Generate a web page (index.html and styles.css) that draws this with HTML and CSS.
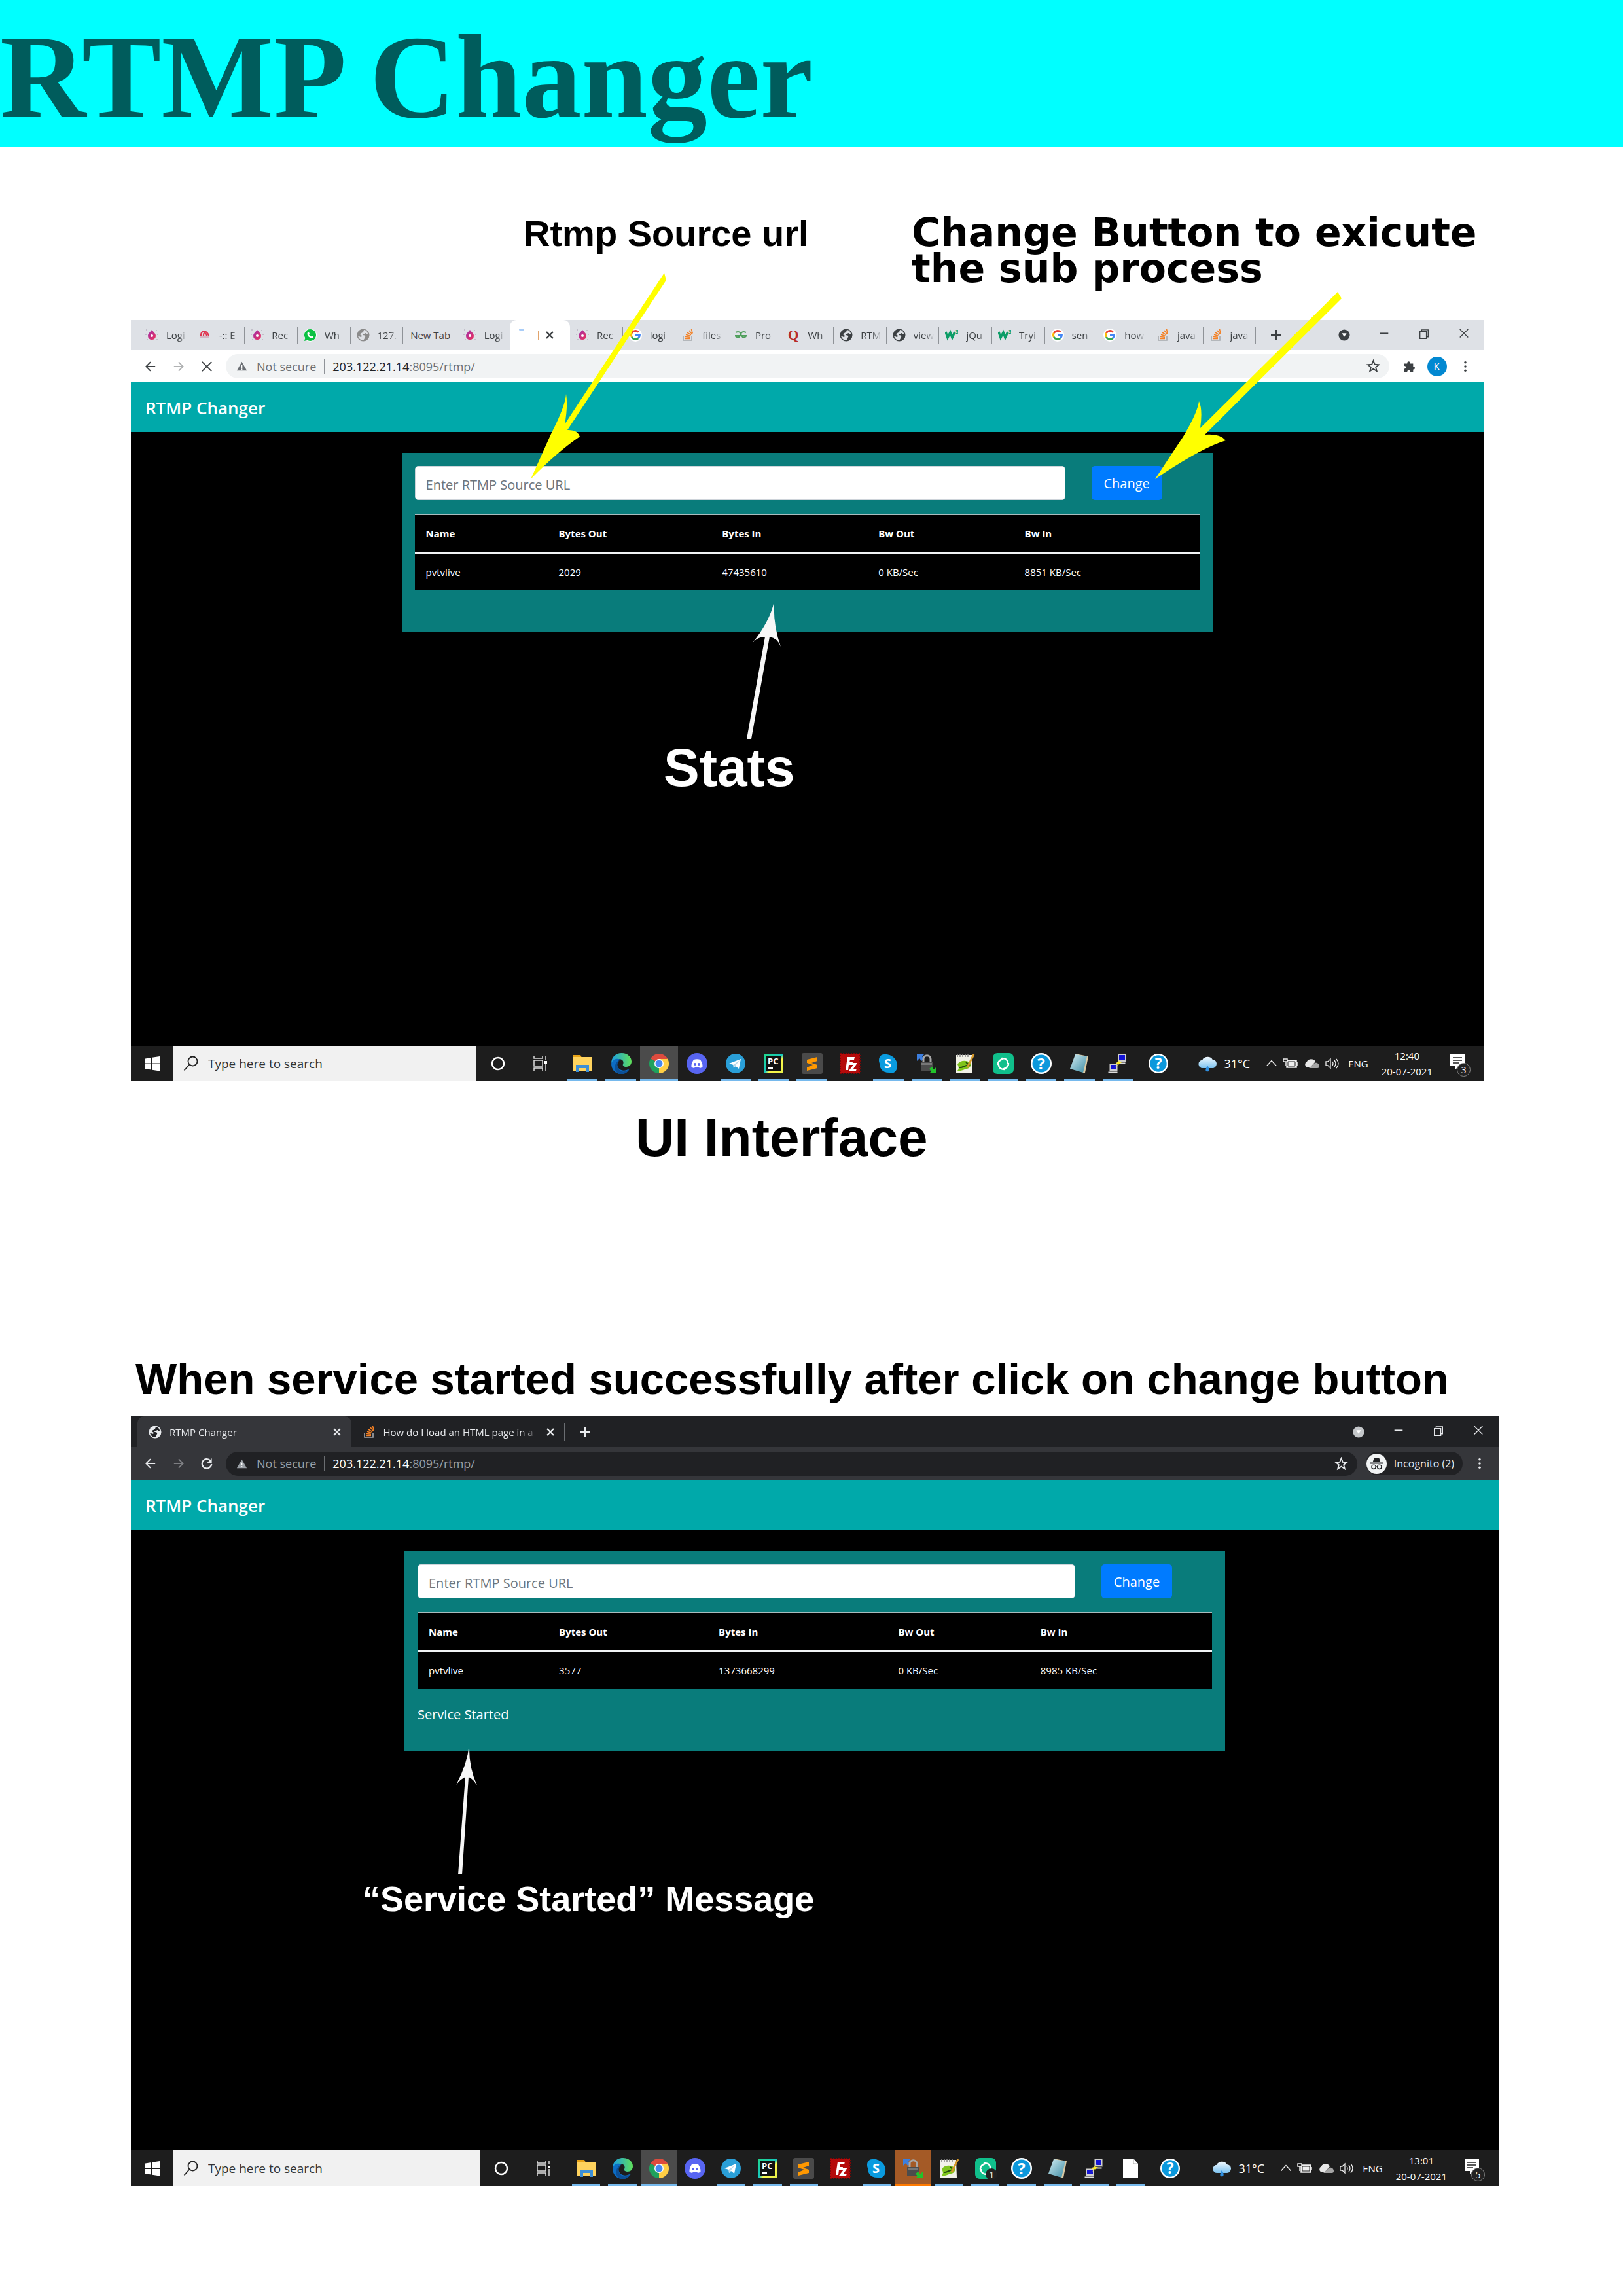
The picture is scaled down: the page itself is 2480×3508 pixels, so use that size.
FILE: index.html
```html
<!DOCTYPE html>
<html lang="en">
<head>
<meta charset="utf-8">
<title>RTMP Changer</title>
<link rel="stylesheet" href="styles.css">
</head>
<body>
<svg class="sprite" aria-hidden="true">
  <defs>
    <linearGradient id="g-drop" x1="0" y1="0" x2="1" y2="1"><stop offset="0" stop-color="#9b2fae"/><stop offset="1" stop-color="#f0305a"/></linearGradient>
    <linearGradient id="g-edge" x1="0" y1="0" x2="1" y2="0"><stop offset="0" stop-color="#1b9de2"/><stop offset="1" stop-color="#5fe05a"/></linearGradient>
    <linearGradient id="g-pc" x1="0" y1="0" x2="1" y2="1"><stop offset="0" stop-color="#21d789"/><stop offset=".5" stop-color="#16c8c0"/><stop offset=".6" stop-color="#fcf84a"/><stop offset="1" stop-color="#e6f04a"/></linearGradient>
    <linearGradient id="g-note" x1="0" y1="0" x2="1" y2="1"><stop offset="0" stop-color="#d4eef4"/><stop offset="1" stop-color="#3b8ba3"/></linearGradient>
    <linearGradient id="g-rain" x1="0" y1="0" x2="0" y2="1"><stop offset="0" stop-color="#f2faff"/><stop offset="1" stop-color="#7cc2f0"/></linearGradient>
  </defs>
  <symbol id="drop" viewBox="0 0 20 20"><path d="M10 2c2 3 6 5 6 9.500a6 5.500 0 0 1-12 0C4 7 8 5 10 2z" fill="url(#g-drop)"/><circle cx="10" cy="11" r="2" fill="#fff"/><g fill="#b9b3c0"><circle cx="2" cy="2" r="1"/><circle cx="17" cy="3" r="1"/><circle cx="1" cy="9" r="1"/><circle cx="19" cy="9" r="1"/><circle cx="3" cy="17" r="1"/><circle cx="18" cy="17" r="1"/></g></symbol>
  <symbol id="arch" viewBox="0 0 20 20"><path d="M4 11c0-9 9-9 12 0M8 11c0-6 3-6 5 0" fill="none" stroke="#e0344f" stroke-width="2.200"/><path d="M3 13h14" stroke="#c98ba0" stroke-width="1"/></symbol>
  <symbol id="whatsapp" viewBox="0 0 20 20"><circle cx="10" cy="10" r="10" fill="#fff"/><path d="M10 1a9 9 0 1 1-4.500 16.800L1 19l1.300-4.300A9 9 0 0 1 10 1z" fill="#0cc143"/><path d="M6 6c1-1 2-1 2.500.500l.500 1.500-1 1c1 2 2 2.500 3.500 3.200l1-1.200 2.500 1.200c0 2-2 2.800-4 2.200-4-1.200-6.500-5-5-8.400z" fill="#fff"/></symbol>
  <symbol id="globe" viewBox="0 0 20 20"><circle cx="10" cy="10" r="9.500" fill="currentColor"/><path d="M11 2c3 0 6 3 6 6-2 1-2-1-4-1-1 2-4 1-4 3 3 0 5 1 4 3-1 1-1 3-3 5-4 0-7-3-8-7l4 2 2-1c0-2-2-2-3-3 1-3 5-1 6-7z" class="globe-land"/></symbol>
  <symbol id="google" viewBox="0 0 20 20"><circle cx="10" cy="10" r="10" fill="#fff"/><g fill="none" stroke-width="3"><path d="M4.300 7A6.400 6.400 0 0 1 14.500 5.500" stroke="#ea4335"/><path d="M4.300 13a6.400 6.400 0 0 1 0-6" stroke="#fbbc05"/><path d="M14.200 14.800A6.400 6.400 0 0 1 4.300 13" stroke="#34a853"/><path d="M10 10h6.400a6.400 6.400 0 0 1-2.200 4.800" stroke="#4285f4"/></g></symbol>
  <symbol id="stack" viewBox="0 0 20 20"><path d="M3 12v6h13v-6" fill="none" stroke="#a5a9ad" stroke-width="1.600"/><path d="M6 15.500h7M6 12.500l7 .8M7 9.300l6.600 2M9 6l6 3.800M12 3l4.500 5.500M15.500 1l1.700 6.500" stroke="#f48024" stroke-width="1.600"/></symbol>
  <symbol id="gfg" viewBox="0 0 20 20"><path d="M2 6c7-3 9 2 7 5-2 4-7 2-7 0h16c0 2-5 4-7 0-2-3 0-8 7-5" fill="none" stroke="#4f9f5c" stroke-width="2"/></symbol>
  <symbol id="quora" viewBox="0 0 20 20"><text x="1" y="17" font-size="21" font-weight="bold" fill="#b92b27" font-family="Liberation Serif">Q</text></symbol>
  <symbol id="w3" viewBox="0 0 20 20"><path d="M1 5l3 9 4-8 3 8 4-9" fill="none" stroke="#0c9d67" stroke-width="3.500"/><text x="16" y="8" font-size="9" font-weight="bold" fill="#0c9d67" font-family="Open Sans">3</text></symbol>
  <symbol id="warn" viewBox="0 0 20 20"><path d="M10 2l9 16H1z" fill="currentColor"/><path d="M10 8v5M10 14.500v2" class="warn-mark" stroke-width="2"/></symbol>
  <symbol id="back" viewBox="0 0 20 20"><path d="M18 10H3M10 2.500L2.500 10l7.500 7.500" fill="none" stroke="currentColor" stroke-width="2"/></symbol>
  <symbol id="forward" viewBox="0 0 20 20"><path d="M2 10h15M10 2.500l7.500 7.500-7.500 7.500" fill="none" stroke="currentColor" stroke-width="2"/></symbol>
  <symbol id="reload" viewBox="0 0 20 20"><path d="M16 5a8 8 0 1 0 2 6" fill="none" stroke="currentColor" stroke-width="2.500"/><path d="M18.500 1v8h-8z" fill="currentColor"/></symbol>
  <symbol id="close" viewBox="0 0 20 20"><path d="M2 2l16 16M18 2L2 18" stroke="currentColor" stroke-width="2"/></symbol>
  <symbol id="tabx" viewBox="0 0 20 20"><path d="M5 5l10 10M15 5L5 15" stroke="currentColor" stroke-width="2.400"/></symbol>
  <symbol id="plus" viewBox="0 0 20 20"><path d="M10 2v16M2 10h16" stroke="currentColor" stroke-width="2.500"/></symbol>
  <symbol id="down" viewBox="0 0 20 20"><circle cx="10" cy="10" r="9.500" fill="currentColor"/><path d="M6 7h8l-4 6z" class="down-mark"/></symbol>
  <symbol id="min" viewBox="0 0 20 20"><path d="M3 7h14" stroke="currentColor" stroke-width="2"/></symbol>
  <symbol id="restore" viewBox="0 0 20 20"><path d="M3 4h11v12H3zM6 4V1h11v12h-3" fill="none" stroke="currentColor" stroke-width="1.500"/></symbol>
  <symbol id="winx" viewBox="0 0 20 20"><path d="M3 0l14 14M17 0L3 14" stroke="currentColor" stroke-width="1.500"/></symbol>
  <symbol id="star" viewBox="0 0 20 20"><path d="M10 2l2.200 5.400 5.800.400-4.500 3.700 1.500 5.700-5-3.200-5 3.200 1.500-5.700L2 7.800l5.800-.400z" fill="none" stroke="currentColor" stroke-width="1.800"/></symbol>
  <symbol id="puzzle" viewBox="0 0 20 20"><path d="M2 5h5c-1-5 6-5 5 0h5v5c4-1 4 6 0 5v4h-5c0-4-5-4-5 0H2v-5c4 0 4-5 0-5z" fill="currentColor"/></symbol>
  <symbol id="menu" viewBox="0 0 20 20"><g fill="currentColor"><circle cx="10" cy="3" r="2"/><circle cx="10" cy="10" r="2"/><circle cx="10" cy="17" r="2"/></g></symbol>
  <symbol id="incognito" viewBox="0 0 32 32"><circle cx="16" cy="16" r="16" fill="#f1f3f4"/><path d="M10 13l2-6h8l2 6zM6 14h20v2H6z" fill="#202124"/><g fill="none" stroke="#202124" stroke-width="1.500"><circle cx="11.500" cy="21" r="3.300"/><circle cx="20.500" cy="21" r="3.300"/><path d="M15 21q1-1 2 0"/></g></symbol>

  <symbol id="windows" viewBox="0 0 24 24"><path d="M1 4.500L10 3v8.500H1zM11.500 2.800L23 1v10.500H11.500zM1 13h9v8.500L1 20zM11.500 13H23v10.500l-11.500-1.800z" fill="#fff"/></symbol>
  <symbol id="search" viewBox="0 0 24 24"><circle cx="14.500" cy="8.500" r="7" fill="none" stroke="#222" stroke-width="1.800"/><path d="M9.500 13.500L1.500 22.500" stroke="#222" stroke-width="1.800"/></symbol>
  <symbol id="cortana" viewBox="0 0 24 24"><circle cx="12" cy="12" r="9" fill="none" stroke="#fff" stroke-width="2.500"/></symbol>
  <symbol id="taskview" viewBox="0 0 24 24"><path d="M2 1v3h13V1M2 23v-4h13v4M2 7h13v9H2zM20 1v5M20 13v10" fill="none" stroke="#ddd" stroke-width="1.500"/><path d="M18 8h4v4h-4z" fill="#fff"/></symbol>
  <symbol id="folder" viewBox="0 0 32 32"><path d="M1 3h12l2 4H1z" fill="#e8a317"/><path d="M1 6h30v21H1z" fill="#ffd35e"/><path d="M6 29V18h20v11h-5v-6H11v6z" fill="#3d8fd6"/></symbol>
  <symbol id="edge" viewBox="0 0 32 32"><path d="M1 16C1 6 8 0 17 0c9 0 15 6 15 13 0 5-4 8-8 8-4 0-6-2-5-4 2-4-1-8-6-8C6 9 2 13 1 16z" fill="url(#g-edge)"/><path d="M1 16C3 9 10 7 15 10c-5 1-7 9-2 14 5 4 10 3 16 0-3 5-7 8-13 8C7 32 1 25 1 16z" fill="#0c6cc4"/><path d="M14 11c-5 4-5 12 1 16 4 3 9 1 14-3-5 10-16 11-21 4C4 20 9 12 14 11z" fill="#0b4f97"/></symbol>
  <symbol id="chrome" viewBox="0 0 32 32"><path d="M16 16L3 8.500A15 15 0 0 1 29 8.500z" fill="#dd4b3e"/><path d="M16 16l13-7.500A15 15 0 0 1 16 31z" fill="#ffce44"/><path d="M16 16v0l0 15A15 15 0 0 1 3 8.500z" fill="#1fa15d"/><path d="M16 9h13.200l-6.500 11L16 31l6-12z" fill="#ffce44"/><circle cx="16" cy="16" r="7" fill="#fff"/><circle cx="16" cy="16" r="5.500" fill="#4688f1"/></symbol>
  <symbol id="discord" viewBox="0 0 32 32"><circle cx="16" cy="16" r="16" fill="#5865f2"/><path d="M11 10c3-1 7-1 10 0 2 3 4 7 3.500 11-1.500 1-3 2-4.500 2l-1-2h-6l-1 2c-1.500 0-3-1-4.500-2C7 17 9 13 11 10z" fill="#fff"/><circle cx="13" cy="17" r="2" fill="#5865f2"/><circle cx="19" cy="17" r="2" fill="#5865f2"/></symbol>
  <symbol id="telegram" viewBox="0 0 32 32"><circle cx="16" cy="16" r="15" fill="#2a9fd8"/><path d="M6 16l18-7-3 15-5-4-3 3-.500-5z" fill="#fff"/><path d="M12.500 18L22 11l-7 9-2 3z" fill="#b9d9ea"/></symbol>
  <symbol id="pycharm" viewBox="0 0 32 32"><path d="M1 1h30v30H1z" fill="url(#g-pc)"/><path d="M5 5h22v22H5z" fill="#111"/><text x="7" y="17" font-size="13" font-weight="bold" fill="#fff" font-family="Open Sans">PC</text><path d="M8 23h7" stroke="#fff" stroke-width="2"/></symbol>
  <symbol id="sublime" viewBox="0 0 32 32"><rect width="32" height="32" rx="3" fill="#4a4a4a"/><path d="M24 6v6l-9 3 9 3v5L8 27v-5l9-4-9-3v-5z" fill="#ff9800"/></symbol>
  <symbol id="filezilla" viewBox="0 0 32 32"><path d="M1 1h30v30H1z" fill="#b50a0a" stroke="#7d0606" stroke-width="2" stroke-dasharray="2 2"/><path d="M9 26l3-20h11l-1 4h-6l-1 4h5l-1 4h-5l-1 8z" fill="#fff"/><path d="M17 15h10l-6 9h5l-1 3H14l7-9h-4z" fill="#fff"/></symbol>
  <symbol id="skype" viewBox="0 0 32 32"><path d="M10 2c3-1 17 1 20 14 1 12-5 16-12 14C6 30 3 22 3 16 0 8 4 2 10 2z" fill="#0a9bdf"/><text x="10" y="23" font-size="20" font-weight="bold" fill="#fff" font-family="Open Sans">S</text></symbol>
  <symbol id="lock" viewBox="0 0 32 32"><path d="M1 2h11l-3 3 3 4-4 3-3-4-4 4z" fill="#3c7fe0"/><path d="M11 15V9c0-7 11-7 11 0v6" fill="none" stroke="#a8a8a8" stroke-width="3"/><path d="M7 14h18v13H7z" fill="#4c4c4c"/><path d="M8 15h16v3H8z" fill="#777"/><path d="M31 31H20l3-3-3-4 4-3 3 4 4-4z" fill="#22c32b"/></symbol>
  <symbol id="npp" viewBox="0 0 32 32"><path d="M3 3h24l1 27H3z" fill="#f2f2e8"/><path d="M5 2v4M9 2v4M13 2v4M17 2v4M21 2v4" stroke="#888" stroke-width="1.500"/><path d="M5 17c4-6 14-7 19-2 4 3-1 10-6 9-4 2-9 4-13 3 3-3 2-6 0-10z" fill="#7fc41c"/><path d="M8 22c5 1 8-4 16-4M18 14l6 5" stroke="#234a10" stroke-width="2" fill="none"/><path d="M30 2L20 22" stroke="#d79a2b" stroke-width="3"/></symbol>
  <symbol id="sync" viewBox="0 0 32 32"><rect width="32" height="32" rx="7" fill="#10bf8b"/><path d="M14 8c7 0 9 4 9 7M24 16c0 5-4 7-7 8M18 25c-7 0-9-4-9-7M8 17c0-5 4-7 7-8" fill="none" stroke="#fff" stroke-width="2.500" stroke-linecap="round"/></symbol>
  <symbol id="help" viewBox="0 0 32 32"><circle cx="16" cy="16" r="16" fill="#fff"/><circle cx="16" cy="16" r="13.500" fill="#0b98dc"/><text x="16" y="25" text-anchor="middle" font-size="24" font-weight="bold" fill="#fff" font-family="Open Sans">?</text></symbol>
  <symbol id="notepad" viewBox="0 0 32 32"><path d="M10 1l20 4-5 25-3 1z" fill="#d9c9a4"/><path d="M10 2l18 3-6 25L2 24z" fill="url(#g-note)"/></symbol>
  <symbol id="putty" viewBox="0 0 32 32"><g stroke="#222" stroke-width="1"><path d="M16 1h13v13H16z" fill="#cfcfcf"/><path d="M13 14h15v3H13z" fill="#ddd"/><path d="M3 16h13v12H3z" fill="#cfcfcf"/><path d="M1 28h15v3H1z" fill="#ddd"/></g><path d="M18 3h9v8h-9zM5 18h9v7H5z" fill="#1414d6"/><path d="M20 10l-8 7 5 0-7 6 12-9h-5z" fill="#ffec1f"/></symbol>
  <symbol id="file" viewBox="0 0 32 32"><path d="M5 1h16l7 8v22H5z" fill="#fff"/><path d="M21 1v8h7" fill="none" stroke="#aaa" stroke-width="1"/></symbol>
  <symbol id="rain" viewBox="0 0 32 32"><path d="M8 24a7 7 0 0 1-1-14 10 9 0 0 1 18-1 7.500 7.500 0 0 1-1 15z" fill="url(#g-rain)"/><path d="M16 19c3 5 3 6 3 8a3 3 0 0 1-6 0c0-2 1-4 3-8z" fill="#2f8fe0"/></symbol>
  <symbol id="caret" viewBox="0 0 20 20"><path d="M2 14l8-9 8 9" fill="none" stroke="#eee" stroke-width="1.600"/></symbol>
  <symbol id="battery" viewBox="0 0 24 24"><path d="M6 7h15v11H6zM22 10v5" fill="#eee" stroke="#eee" stroke-width="1.500"/><path d="M8 9h11v7H8z" fill="#eee" stroke="#222" stroke-width="1"/><path d="M1 5h6v4H1zM4 9v7" stroke="#eee" stroke-width="1.500" fill="#222"/></symbol>
  <symbol id="cloud" viewBox="0 0 24 24"><path d="M5 18a5 5 0 0 1 0-9 7 6 0 0 1 13 0l-8 9z" fill="#e8e8e8"/><path d="M8 19l9-8c4-1 7 2 7 5 0 2-1 3-3 3z" fill="#a5a5a5"/></symbol>
  <symbol id="volume" viewBox="0 0 24 24"><path d="M2 9h3l4-4v14l-4-4H2z" fill="none" stroke="#eee" stroke-width="1.300"/><path d="M12 9q2 3 0 6M15 7q4 5 0 10M18 5q6 7 0 14" fill="none" stroke="#eee" stroke-width="1.300"/></symbol>
  <symbol id="note" viewBox="0 0 32 32"><path d="M1 2h22v18h-9l-5 5v-5H1z" fill="#fff"/><path d="M5 7h14M5 11h14M5 15h9" stroke="#222" stroke-width="1.500"/></symbol>
</svg>

<header class="banner"><h1>RTMP Changer</h1></header>

<main>
  <section class="figure">
    <div class="labels">
      <p class="label-source">Rtmp Source url</p>
      <p class="label-change">Change Button to exicute<br>the sub process</p>
    </div>

    <div class="shot shot-light">
      <div class="tabstrip">
        <div class="tabs">
          <button class="tab"><svg><use href="#drop"/></svg><span>Logi</span></button>
          <button class="tab"><svg><use href="#arch"/></svg><span>-:: E</span></button>
          <button class="tab"><svg><use href="#drop"/></svg><span>Rec</span></button>
          <button class="tab"><svg><use href="#whatsapp"/></svg><span>Wh</span></button>
          <button class="tab"><svg class="faded"><use href="#globe"/></svg><span>127.</span></button>
          <button class="tab tab-plain"><span>New Tab</span></button>
          <button class="tab tab-last"><svg><use href="#drop"/></svg><span>Logi</span></button>
          <button class="tab tab-active"><i class="spinner"></i><i class="sliver"></i><svg><use href="#tabx"/></svg></button>
          <button class="tab"><svg><use href="#drop"/></svg><span>Rec</span></button>
          <button class="tab"><svg><use href="#google"/></svg><span>logi</span></button>
          <button class="tab"><svg><use href="#stack"/></svg><span>files</span></button>
          <button class="tab"><svg><use href="#gfg"/></svg><span>Pro</span></button>
          <button class="tab"><svg><use href="#quora"/></svg><span>Wh</span></button>
          <button class="tab"><svg><use href="#globe"/></svg><span>RTM</span></button>
          <button class="tab"><svg><use href="#globe"/></svg><span>view</span></button>
          <button class="tab"><svg><use href="#w3"/></svg><span>jQu</span></button>
          <button class="tab"><svg><use href="#w3"/></svg><span>Tryi</span></button>
          <button class="tab"><svg><use href="#google"/></svg><span>sen</span></button>
          <button class="tab"><svg><use href="#google"/></svg><span>how</span></button>
          <button class="tab"><svg><use href="#stack"/></svg><span>java</span></button>
          <button class="tab"><svg><use href="#stack"/></svg><span>java</span></button>
        </div>
        <button class="newtab" aria-label="New tab"><svg><use href="#plus"/></svg></button>
        <div class="wincontrols">
          <button aria-label="Tab search"><svg><use href="#down"/></svg></button>
          <button aria-label="Minimise"><svg><use href="#min"/></svg></button>
          <button aria-label="Restore"><svg><use href="#restore"/></svg></button>
          <button aria-label="Close"><svg><use href="#winx"/></svg></button>
        </div>
      </div>
      <div class="toolbar">
        <button class="tool" aria-label="Back"><svg><use href="#back"/></svg></button>
        <button class="tool dim" aria-label="Forward"><svg><use href="#forward"/></svg></button>
        <button class="tool" aria-label="Stop"><svg><use href="#close"/></svg></button>
        <div class="omnibox">
          <svg><use href="#warn"/></svg><span class="secure">Not secure</span>
          <span class="url"><b>203.122.21.14</b>:8095/rtmp/</span>
          <svg class="star"><use href="#star"/></svg>
        </div>
        <button class="tool" aria-label="Extensions"><svg><use href="#puzzle"/></svg></button>
        <button class="tool" aria-label="Profile"><span class="avatar">K</span></button>
        <button class="tool" aria-label="Menu"><svg><use href="#menu"/></svg></button>
      </div>
      <nav class="navbar"><a href="#">RTMP Changer</a></nav>
      <div class="page">
        <div class="panel">
          <form class="source-form">
            <input type="text" placeholder="Enter RTMP Source URL" aria-label="RTMP source URL">
            <button type="button">Change</button>
          </form>
          <table class="stats">
            <colgroup><col class="a1"><col class="a2"><col class="a3"><col class="a4"><col></colgroup>
            <thead><tr><th>Name</th><th>Bytes Out</th><th>Bytes In</th><th>Bw Out</th><th>Bw In</th></tr></thead>
            <tbody><tr><td>pvtvlive</td><td>2029</td><td>47435610</td><td>0 KB/Sec</td><td>8851 KB/Sec</td></tr></tbody>
          </table>
        </div>
      </div>
      <div class="taskbar">
        <button class="start" aria-label="Start"><svg><use href="#windows"/></svg></button>
        <label class="searchbox"><svg><use href="#search"/></svg><input type="text" placeholder="Type here to search" aria-label="Search"></label>
        <button class="sys" aria-label="Cortana"><svg><use href="#cortana"/></svg></button>
        <button class="sys" aria-label="Task view"><svg><use href="#taskview"/></svg></button>
        <div class="apps">
          <button class="app open"><svg><use href="#folder"/></svg></button>
          <button class="app open"><svg><use href="#edge"/></svg></button>
          <button class="app open current"><svg><use href="#chrome"/></svg></button>
          <button class="app"><svg><use href="#discord"/></svg></button>
          <button class="app open"><svg><use href="#telegram"/></svg></button>
          <button class="app open"><svg><use href="#pycharm"/></svg></button>
          <button class="app open"><svg><use href="#sublime"/></svg></button>
          <button class="app"><svg><use href="#filezilla"/></svg></button>
          <button class="app open"><svg><use href="#skype"/></svg></button>
          <button class="app open"><svg><use href="#lock"/></svg></button>
          <button class="app open"><svg><use href="#npp"/></svg></button>
          <button class="app open"><svg><use href="#sync"/></svg></button>
          <button class="app open"><svg><use href="#help"/></svg></button>
          <button class="app open"><svg><use href="#notepad"/></svg></button>
          <button class="app open"><svg><use href="#putty"/></svg></button>
        </div>
        <button class="sys assist" aria-label="Help"><svg><use href="#help"/></svg></button>
        <div class="tray">
          <svg class="weather"><use href="#rain"/></svg><span class="temp">31°C</span>
          <svg class="caret"><use href="#caret"/></svg>
          <svg><use href="#battery"/></svg><svg><use href="#cloud"/></svg><svg><use href="#volume"/></svg>
          <span class="lang">ENG</span>
          <span class="clock">12:40<br>20-07-2021</span>
          <span class="notes"><svg><use href="#note"/></svg><em>3</em></span>
        </div>
      </div>
      <p class="callout callout-stats">Stats</p>
      <svg class="arrow arrow-stats" viewBox="1140 918 56 212"><path d="M1183 919Q1181 955 1193 988Q1188 975 1176 973L1148 1129L1141 1129L1169 973Q1158 973 1150 982Q1176 950 1183 919z" fill="#f7f7f7"/></svg>
    </div>

    <svg class="arrow arrow-source" viewBox="810 416 210 318"><path d="M1015 417L1018 428L867 657Q882 656 886 667Q852 690 811 732L842 663Q864 620 865 602Q868 620 863 648z" fill="#ff0"/></svg>
    <svg class="arrow arrow-change" viewBox="1764 445 288 288"><path d="M2044 446L2050 456L1841 664Q1864 662 1873 673Q1836 684 1765 732L1808 667Q1830 630 1832 613Q1838 625 1834 654z" fill="#ff0"/></svg>
    <h2 class="figcaption">UI Interface</h2>
  </section>

  <section class="figure">
    <h2 class="heading">When service started successfully after click on change button</h2>
    <div class="shot shot-dark">
      <div class="tabstrip">
        <div class="tabs">
          <button class="tab tab-active"><svg><use href="#globe"/></svg><span>RTMP Changer</span><svg><use href="#tabx"/></svg></button>
          <button class="tab"><svg><use href="#stack"/></svg><span>How do I load an HTML page in a</span><svg><use href="#tabx"/></svg></button>
        </div>
        <button class="newtab" aria-label="New tab"><svg><use href="#plus"/></svg></button>
        <div class="wincontrols">
          <button aria-label="Tab search"><svg><use href="#down"/></svg></button>
          <button aria-label="Minimise"><svg><use href="#min"/></svg></button>
          <button aria-label="Restore"><svg><use href="#restore"/></svg></button>
          <button aria-label="Close"><svg><use href="#winx"/></svg></button>
        </div>
      </div>
      <div class="toolbar">
        <button class="tool" aria-label="Back"><svg><use href="#back"/></svg></button>
        <button class="tool dim" aria-label="Forward"><svg><use href="#forward"/></svg></button>
        <button class="tool" aria-label="Reload"><svg><use href="#reload"/></svg></button>
        <div class="omnibox">
          <svg><use href="#warn"/></svg><span class="secure">Not secure</span>
          <span class="url"><b>203.122.21.14</b>:8095/rtmp/</span>
          <svg class="star"><use href="#star"/></svg>
        </div>
        <button class="pill"><svg><use href="#incognito"/></svg>Incognito (2)</button>
        <button class="tool" aria-label="Menu"><svg><use href="#menu"/></svg></button>
      </div>
      <nav class="navbar"><a href="#">RTMP Changer</a></nav>
      <div class="page">
        <div class="panel">
          <form class="source-form">
            <input type="text" placeholder="Enter RTMP Source URL" aria-label="RTMP source URL">
            <button type="button">Change</button>
          </form>
          <table class="stats">
            <colgroup><col class="b1"><col class="b2"><col class="b3"><col class="b4"><col></colgroup>
            <thead><tr><th>Name</th><th>Bytes Out</th><th>Bytes In</th><th>Bw Out</th><th>Bw In</th></tr></thead>
            <tbody><tr><td>pvtvlive</td><td>3577</td><td>1373668299</td><td>0 KB/Sec</td><td>8985 KB/Sec</td></tr></tbody>
          </table>
          <p class="status">Service Started</p>
        </div>
      </div>
      <div class="taskbar">
        <button class="start" aria-label="Start"><svg><use href="#windows"/></svg></button>
        <label class="searchbox"><svg><use href="#search"/></svg><input type="text" placeholder="Type here to search" aria-label="Search"></label>
        <button class="sys" aria-label="Cortana"><svg><use href="#cortana"/></svg></button>
        <button class="sys" aria-label="Task view"><svg><use href="#taskview"/></svg></button>
        <div class="apps">
          <button class="app open"><svg><use href="#folder"/></svg></button>
          <button class="app open"><svg><use href="#edge"/></svg></button>
          <button class="app open current"><svg><use href="#chrome"/></svg></button>
          <button class="app"><svg><use href="#discord"/></svg></button>
          <button class="app open"><svg><use href="#telegram"/></svg></button>
          <button class="app open"><svg><use href="#pycharm"/></svg></button>
          <button class="app open"><svg><use href="#sublime"/></svg></button>
          <button class="app"><svg><use href="#filezilla"/></svg></button>
          <button class="app open"><svg><use href="#skype"/></svg></button>
          <button class="app open alert"><svg><use href="#lock"/></svg></button>
          <button class="app open"><svg><use href="#npp"/></svg></button>
          <button class="app open"><svg><use href="#sync"/></svg><em>1</em></button>
          <button class="app open"><svg><use href="#help"/></svg></button>
          <button class="app open"><svg><use href="#notepad"/></svg></button>
          <button class="app open"><svg><use href="#putty"/></svg></button>
          <button class="app open"><svg><use href="#file"/></svg></button>
        </div>
        <button class="sys assist" aria-label="Help"><svg><use href="#help"/></svg></button>
        <div class="tray">
          <svg class="weather"><use href="#rain"/></svg><span class="temp">31°C</span>
          <svg class="caret"><use href="#caret"/></svg>
          <svg><use href="#battery"/></svg><svg><use href="#cloud"/></svg><svg><use href="#volume"/></svg>
          <span class="lang">ENG</span>
          <span class="clock">13:01<br>20-07-2021</span>
          <span class="notes"><svg><use href="#note"/></svg><em>5</em></span>
        </div>
      </div>
      <p class="callout callout-message">“Service Started” Message</p>
      <svg class="arrow arrow-message" viewBox="696 2665 34 200"><path d="M717 2666Q716 2700 729 2728Q723 2718 716 2715L706 2864L700 2864L711 2715Q704 2718 697 2727Q714 2695 717 2666z" fill="#f7f7f7"/></svg>
    </div>
  </section>
</main>
</body>
</html>
```
FILE: styles.css
```css
* { box-sizing: border-box; }
body { margin: 0; background: #fff; color: #000; font-family: "Open Sans", "Noto Sans", sans-serif; }
h1, h2, p { margin: 0; }
button { border: 0; padding: 0; margin: 0; background: none; color: inherit; font: inherit; }
svg { display: block; flex: none; width: 20px; height: 20px; overflow: visible; }
em { font-style: normal; }
.sprite { position: absolute; width: 0; height: 0; visibility: hidden; }

/* Document headings */
.banner { background: #0ff; padding-top: 10px; }
.banner h1 { font: bold 182px/215px "Liberation Serif", serif; color: #005c5c; white-space: nowrap; }
.figure { position: relative; }
.labels { display: flex; align-items: baseline; min-height: 264px; padding: 92px 0 0 800px; font-weight: bold; white-space: nowrap; }
.label-source { width: 593px; font: bold 56px/80px "Liberation Sans", sans-serif; }
.label-change { font: bold 60px/55px "DejaVu Sans", sans-serif; }
.figcaption { padding: 41px 0 284px 971px; font: bold 82px/90px "Liberation Sans", sans-serif; }
.heading { padding: 0 0 17px 207px; font: bold 67px/80px "Liberation Sans", sans-serif; white-space: nowrap; }

/* Screens */
.shot { position: relative; background: #000; }
.shot-light { margin: 0 212px 0 200px; --chrome: #dee1e6; --bar: #fff; --field: #f1f3f4; --ink: #3c4043; --muted: #6b6f74; --strong: #202124; --line: #8f9398; }
.shot-dark { margin: 0 190px 0 200px; --chrome: #202124; --bar: #35363a; --field: #202124; --ink: #e8eaed; --muted: #9aa0a6; --strong: #fff; --line: #6a6d71; }

.tabstrip { display: flex; align-items: center; height: 46px; background: var(--chrome); color: var(--ink); }
.shot-dark .tabstrip { height: 47px; }
.tabs { display: flex; align-self: stretch; flex: 0 1 1706px; margin-left: 13px; min-width: 0; }
.shot-dark .tabs { flex-basis: 653px; margin-left: 10px; }
.tab { position: relative; display: flex; align-items: center; flex: 1 1 0; gap: 12px; min-width: 0; padding: 0 4px 0 9px; font-size: 15px; line-height: 24px; text-align: left; white-space: nowrap; }
.tab::after { content: ""; position: absolute; right: 0; top: 10px; width: 1px; height: 27px; background: var(--line); }
.tab span { flex: 1; overflow: hidden; -webkit-mask-image: linear-gradient(to right, #000 50%, transparent 90%); mask-image: linear-gradient(to right, #000 50%, transparent 90%); }
.tab-plain span { -webkit-mask-image: none; mask-image: none; }
.tab-plain { padding-left: 11px; }
.tab-last::after, .tab-active::after { display: none; }
.tab-active { background: var(--bar); border-radius: 10px 10px 0 0; }
.faded { color: #8b8b8b; }
.shot-light .tab-active { gap: 7px; padding: 0 10px 0 14px; }
.spinner { width: 8px; height: 3px; margin: -18px 14px 0 0; border-radius: 3px; background: #a9cdf8; }
.sliver { width: 1px; height: 13px; background: #e2a46c; }
.shot-dark .tab { gap: 12px; padding: 0 12px 0 17px; }
.shot-dark .tab span { -webkit-mask-image: linear-gradient(to right, #000 92%, transparent); mask-image: linear-gradient(to right, #000 92%, transparent); }
.newtab { width: 61px; display: grid; place-items: center; }
.wincontrols { display: flex; margin-left: auto; padding-right: 1px; }
.wincontrols button { width: 61px; display: grid; place-items: center; }
.wincontrols svg { width: 18px; height: 18px; }
.globe-land { fill: var(--chrome, #fff); }
.down-mark { fill: #fff; }
.warn-mark { stroke: #fff; }
.shot-dark .down-mark { fill: #202124; }
.shot-dark .wincontrols button:first-child { color: #c4c7ca; }

.toolbar { display: flex; align-items: center; height: 49px; padding: 0 8px; background: var(--bar); color: var(--ink); }
.shot-dark .toolbar { height: 50px; }
.tool { width: 43px; display: grid; place-items: center; }
.tool svg { width: 18px; height: 18px; }
.dim { opacity: .4; }
.omnibox { flex: 1; display: flex; align-items: center; height: 37px; margin: 0 8px; padding: 0 14px 0 16px; border-radius: 19px; background: var(--field); color: var(--muted); font-size: 18px; line-height: 26px; white-space: nowrap; }
.omnibox svg { width: 17px; height: 17px; }
.secure { margin: 0 12px 0 14px; }
.url { padding-left: 12px; border-left: 1px solid var(--line); line-height: 22px; }
.url b { font-weight: normal; color: var(--strong); }
.omnibox .star { width: 21px; height: 21px; margin-left: auto; color: var(--ink); }
.avatar { width: 30px; height: 30px; border-radius: 50%; background: #0288d1; color: #fff; font-size: 16px; line-height: 30px; text-align: center; }
.pill { display: flex; align-items: center; gap: 11px; height: 36px; margin: 0 4px 0 5px; padding: 0 13px 0 1px; border-radius: 18px; background: #202124; font-size: 15px; white-space: nowrap; }
.shot-dark .pill { font-size: 16px; }
.pill svg { width: 31px; height: 31px; }

/* Application */
.navbar { display: flex; align-items: center; height: 76px; padding: 2px 22px 0; background: #00a9aa; }
.navbar a { color: #fff; font-size: 26px; font-weight: 600; line-height: 36px; text-decoration: none; }
.page { min-height: 938px; padding-top: 32px; background: #000; }
.shot-dark .page { min-height: 948px; padding-top: 33px; }
.panel { width: 60%; margin: 0 auto; padding: 20px 20px 38px; background: #097c7b; color: #fff; }
.source-form { display: grid; grid-template-columns: repeat(12, minmax(0, 1fr)); column-gap: 40px; margin-bottom: 21px; }
.source-form input { grid-column: span 10; height: 52px; padding: 4px 16px 0; border: 1px solid #ced4da; border-radius: 5px; background: #fff; font: 20px/30px "Open Sans", sans-serif; }
.source-form input::placeholder { color: #6c757d; opacity: 1; }
.source-form button { width: 108px; height: 52px; border-radius: 5px; background: #007bff; color: #fff; font-size: 20px; }
.stats { width: 100%; margin-bottom: 25px; border-spacing: 0; table-layout: fixed; background: #000; font-size: 15px; line-height: 20px; }
.stats th, .stats td { padding: 0 17px; text-align: left; }
.stats th { height: 61px; border-top: 2px solid #a9bcbe; border-bottom: 3px solid #f1f3f5; font-weight: bold; }
.stats td { height: 56px; }
.a1 { width: 16.9%; } .a2 { width: 20.8%; } .a3 { width: 19.9%; } .a4 { width: 18.6%; }
.b1 { width: 16.4%; } .b2 { width: 20.1%; } .b3 { width: 22.6%; } .b4 { width: 17.9%; }
.status { margin-bottom: 3px; font-size: 20px; line-height: 30px; }

/* Taskbar */
.taskbar { display: flex; align-items: stretch; height: 54px; background: #1d1d1d; color: #fff; }
.shot-dark .taskbar { height: 55px; }
.start, .sys { flex: none; width: 65px; display: grid; place-items: center; }
.start svg, .sys svg { width: 24px; height: 24px; }
.searchbox { flex: 0 1 463px; display: flex; align-items: center; gap: 14px; padding-left: 15px; background: #f1f1f1; }
.shot-dark .searchbox { flex-basis: 468px; }
.searchbox input { flex: 1; min-width: 0; border: 0; padding: 0; background: none; font: 19px/28px "Open Sans", sans-serif; }
.searchbox input::placeholder { color: #333; opacity: 1; }
.searchbox svg { width: 24px; height: 24px; }
.apps { display: flex; flex: 0 1 876px; margin-left: 3px; }
.shot-dark .apps { flex-basis: 887px; margin-left: 5px; }
.app { position: relative; flex: 1; display: grid; place-items: center; }
.app svg { width: 32px; height: 32px; }
.open::after { content: ""; position: absolute; left: 6px; right: 6px; bottom: 0; height: 3px; background: #76b9ed; }
.current { background: #4b4b4b; }
.alert { background: #a45a26; }
.current::after, .alert::after { left: 0; right: 0; }
.alert::after { background: #ff7a00; }
.app em { position: absolute; right: 9px; bottom: 9px; width: 18px; height: 18px; border-radius: 50%; background: #222; font-size: 13px; line-height: 18px; text-align: center; }
.sys.assist svg { width: 30px; height: 30px; }
.tray { display: flex; align-items: center; gap: 8px; margin-left: auto; padding-right: 21px; font-size: 15px; line-height: 24px; white-space: nowrap; }
.tray svg { width: 24px; height: 24px; }
.tray .weather { width: 28px; height: 28px; }
.temp { margin: 0 16px 0 4px; font-size: 18px; }
.tray .caret { width: 18px; height: 18px; }
.lang { margin: 0 12px 0 4px; }
.clock { text-align: center; }
.notes { position: relative; margin-left: 18px; }
.tray .notes svg { width: 32px; height: 32px; }
.notes em { position: absolute; right: 0; bottom: -4px; width: 21px; height: 21px; border: 1px solid #888; border-radius: 50%; background: #222; font-size: 14px; line-height: 19px; text-align: center; }

/* Annotations drawn over the screens */
.callout { position: absolute; color: #fff; font-family: "Liberation Sans", sans-serif; font-weight: bold; white-space: nowrap; }
.callout-stats { left: 814px; top: 639px; font-size: 82px; line-height: 90px; }
.callout-message { left: 354px; top: 707px; font-size: 54px; line-height: 60px; }
.arrow { position: absolute; }
.arrow-stats { left: 940px; top: 429px; width: 56px; height: 212px; }
.arrow-message { left: 496px; top: 501px; width: 34px; height: 200px; }
.arrow-source { left: 810px; top: 191px; width: 210px; height: 318px; }
.arrow-change { left: 1764px; top: 220px; width: 288px; height: 288px; }
```
